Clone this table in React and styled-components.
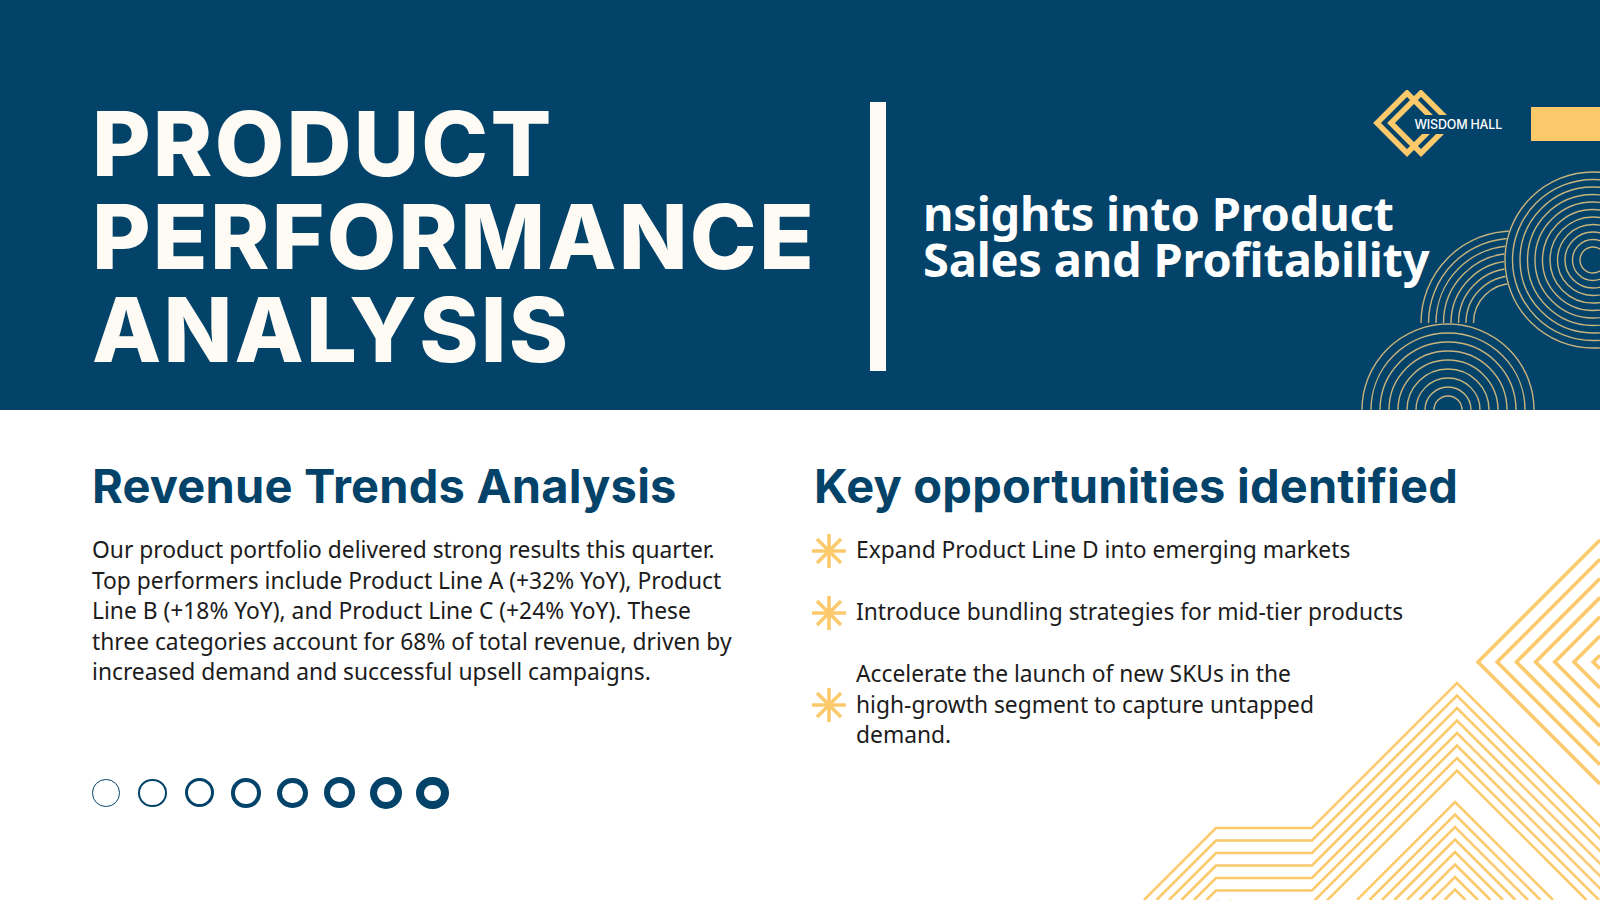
import React from "react";
import styled, { createGlobalStyle } from "styled-components";

const NAVY = "#03436a";
const GOLD = "#fcc96b";
const RING = "#c9b37d";

const GlobalStyle = createGlobalStyle`
  html, body {
    margin: 0;
    padding: 0;
    background: #ffffff;
  }
  body {
    font-family: "Noto Sans", sans-serif;
    overflow: hidden;
  }
`;

const Page = styled.div`
  width: 1600px;
  height: 900px;
  overflow: hidden;
  display: flex;
  flex-direction: column;
  background: #ffffff;
`;

// ---------- header ----------
const Header = styled.header`
  position: relative;
  flex-shrink: 0;
  height: 410px;
  box-sizing: border-box;
  padding: 96px 0 34px 92px;
  display: flex;
  align-items: center;
  background: ${NAVY};
  overflow: hidden;
`;

const Title = styled.h1`
  position: relative;
  z-index: 1;
  margin: 0;
  width: 778px;
  flex-shrink: 0;
  font-family: Inter, "Noto Sans", sans-serif;
  font-weight: 800;
  font-size: 90px;
  line-height: 93px;
  letter-spacing: 2.2px;
  color: #fdfbf4;
`;

const TitleLine = styled.span`
  display: block;
  white-space: nowrap;
`;

const Divider = styled.div`
  flex-shrink: 0;
  width: 16px;
  height: 269px;
  background: #fdfbf4;
`;

const Subtitle = styled.p`
  position: relative;
  z-index: 1;
  margin: 0 0 0 37px;
  font-family: "Noto Sans", sans-serif;
  font-weight: 700;
  font-size: 47px;
  line-height: 46px;
  letter-spacing: -0.2px;
  color: #ffffff;
  white-space: nowrap;
`;

const Brand = styled.div`
  position: absolute;
  top: 90px;
  right: 0;
  z-index: 2;
  display: flex;
  align-items: center;
`;

const LogoText = styled.span`
  position: relative;
  margin-left: -40px;
  padding: 2px 0 2px 2px;
  background: ${NAVY};
  font-family: Inter, sans-serif;
  font-weight: 500;
  font-size: 12.5px;
  letter-spacing: -0.2px;
  color: #ffffff;
`;

const BrandBar = styled.div`
  width: 69px;
  height: 34px;
  margin-left: 29px;
  background: ${GOLD};
`;

const Rings = styled.svg`
  position: absolute;
  right: 0;
  bottom: 0;
  width: 280px;
  height: 250px;
`;

// ---------- body ----------
const Content = styled.section`
  position: relative;
  flex: 1;
  box-sizing: border-box;
  padding: 48px 0 0 92px;
  display: grid;
  grid-template-columns: 720px 1fr;
`;

const Column = styled.div`
  position: relative;
  z-index: 1;
  display: flex;
  flex-direction: column;
  align-items: flex-start;
`;

const Heading = styled.h2`
  margin: 0 0 21px ${(p) => p.$indent || 0}px;
  font-family: Inter, sans-serif;
  font-weight: 700;
  font-size: 47px;
  line-height: 1.2;
  letter-spacing: 0.2px;
  color: ${NAVY};
  white-space: nowrap;
`;

const Body = styled.p`
  margin: 0;
  font-family: "Noto Sans", sans-serif;
  font-size: 22.8px;
  line-height: 30.5px;
  color: #1c1c1c;
  white-space: nowrap;
`;

const Dots = styled.div`
  display: flex;
  align-items: center;
  height: 34px;
  margin: 88px 0 0 -9.5px;
`;

const DotCell = styled.div`
  width: 46.7px;
  display: flex;
  justify-content: center;
`;

const Dot = styled.div`
  box-sizing: border-box;
  width: ${(p) => p.$size}px;
  height: ${(p) => p.$size}px;
  border: ${(p) => p.$stroke}px solid ${NAVY};
  border-radius: 50%;
`;

const List = styled.ul`
  margin: 0;
  padding: 0;
  list-style: none;
  display: flex;
  flex-direction: column;
  gap: 31.5px;
`;

const Item = styled.li`
  display: flex;
  align-items: center;
  gap: 10px;
`;

const Star = styled.svg`
  flex-shrink: 0;
  margin: -2px 0;
`;

const Lines = styled.svg`
  position: absolute;
  right: 0;
  bottom: 0;
  width: 480px;
  height: 380px;
`;

const Asterisk = () => (
  <Star width="34" height="34" viewBox="0 0 34 34">
    <g stroke={GOLD} strokeWidth="3.6">
      <line x1="17" y1="0" x2="17" y2="34" />
      <line x1="0" y1="17" x2="34" y2="17" />
      <line x1="5" y1="5" x2="29" y2="29" />
      <line x1="29" y1="5" x2="5" y2="29" />
    </g>
  </Star>
);

const LogoMark = () => (
  <svg width="80" height="68" viewBox="0 0 80 68">
    <g fill="none" stroke={GOLD} strokeWidth="5.5">
      <path d="M34 3 L4 33 L34 63 L64 33 Z" />
      <path d="M48 3 L18 33 L48 63 L78 33 Z" />
    </g>
  </svg>
);

const ringSet = (cx, cy, radii, half) =>
  radii.map((r) =>
    half ? (
      <path
        key={`${cx}-${r}`}
        d={`M${cx - r} ${cy} A${r} ${r} 0 0 1 ${cx + r} ${cy}`}
      />
    ) : (
      <circle key={`${cx}-${r}`} cx={cx} cy={cy} r={r} />
    )
  );

const range = (n, start, step) =>
  Array.from({ length: n }, (_, i) => start + i * step);

const chevrons = range(7, 1478, 19.2).map((x) => {
  const d = 1600 - x;
  return `M1600 ${662 - d} L${x} 662 L1600 ${662 + d}`;
});

const ridge = range(8, 683, 12.5).map((y) => {
  const knee = 828 + (y - 683);
  return `M${1216 - (900 - knee)} 900 L1216 ${knee} L1312 ${knee} L1457 ${y} L${
    1457 + (900 - y)
  } 900`;
});

const peak = range(8, 802, 12.5).map(
  (y) => `M${1455 - (900 - y)} 900 L1455 ${y} L${1455 + (900 - y)} 900`
);

const dots = range(8, 0, 1).map((i) => ({
  size: 27.6 + i * 0.7,
  stroke: 1.7 + i * 0.9,
}));

export default function App() {
  return (
    <>
      <GlobalStyle />
      <Page>
        <Header>
          <Rings viewBox="1320 160 280 250">
            <g fill="none" stroke={RING} strokeWidth="1.4">
              {ringSet(1513, 323, range(8, 39.5, 7.5), true)}
              {ringSet(1448, 410, range(9, 14, 9), true)}
            </g>
            <circle cx="1593" cy="260" r="89" fill={NAVY} />
            <g fill="none" stroke={RING} strokeWidth="1.4">
              {ringSet(1593, 260, range(11, 13, 7.5), false)}
            </g>
          </Rings>

          <Title>
            <TitleLine>PRODUCT</TitleLine>
            <TitleLine>PERFORMANCE</TitleLine>
            <TitleLine>ANALYSIS</TitleLine>
          </Title>
          <Divider />
          <Subtitle>
            nsights into Product
            <br />
            Sales and Profitability
          </Subtitle>

          <Brand>
            <LogoMark />
            <LogoText>WISDOM HALL</LogoText>
            <BrandBar />
          </Brand>
        </Header>

        <Content>
          <Lines viewBox="1120 520 480 380">
            <g fill="none" stroke={GOLD} strokeWidth="3.6">
              {chevrons.map((d) => (
                <path key={d} d={d} />
              ))}
            </g>
            <g fill="none" stroke={GOLD} strokeWidth="2.6">
              {ridge.map((d) => (
                <path key={d} d={d} />
              ))}
              {peak.map((d) => (
                <path key={d} d={d} />
              ))}
            </g>
          </Lines>

          <Column>
            <Heading>Revenue Trends Analysis</Heading>
            <Body>
              Our product portfolio delivered strong results this quarter.
              <br />
              Top performers include Product Line A (+32% YoY), Product
              <br />
              Line B (+18% YoY), and Product Line C (+24% YoY). These
              <br />
              three categories account for 68% of total revenue, driven by
              <br />
              increased demand and successful upsell campaigns.
            </Body>
            <Dots>
              {dots.map((d, i) => (
                <DotCell key={i}>
                  <Dot $size={d.size} $stroke={d.stroke} />
                </DotCell>
              ))}
            </Dots>
          </Column>

          <Column>
            <Heading $indent={2}>Key opportunities identified</Heading>
            <List>
              <Item>
                <Asterisk />
                <Body>Expand Product Line D into emerging markets</Body>
              </Item>
              <Item>
                <Asterisk />
                <Body>Introduce bundling strategies for mid-tier products</Body>
              </Item>
              <Item>
                <Asterisk />
                <Body>
                  Accelerate the launch of new SKUs in the
                  <br />
                  high-growth segment to capture untapped
                  <br />
                  demand.
                </Body>
              </Item>
            </List>
          </Column>
        </Content>
      </Page>
    </>
  );
}
